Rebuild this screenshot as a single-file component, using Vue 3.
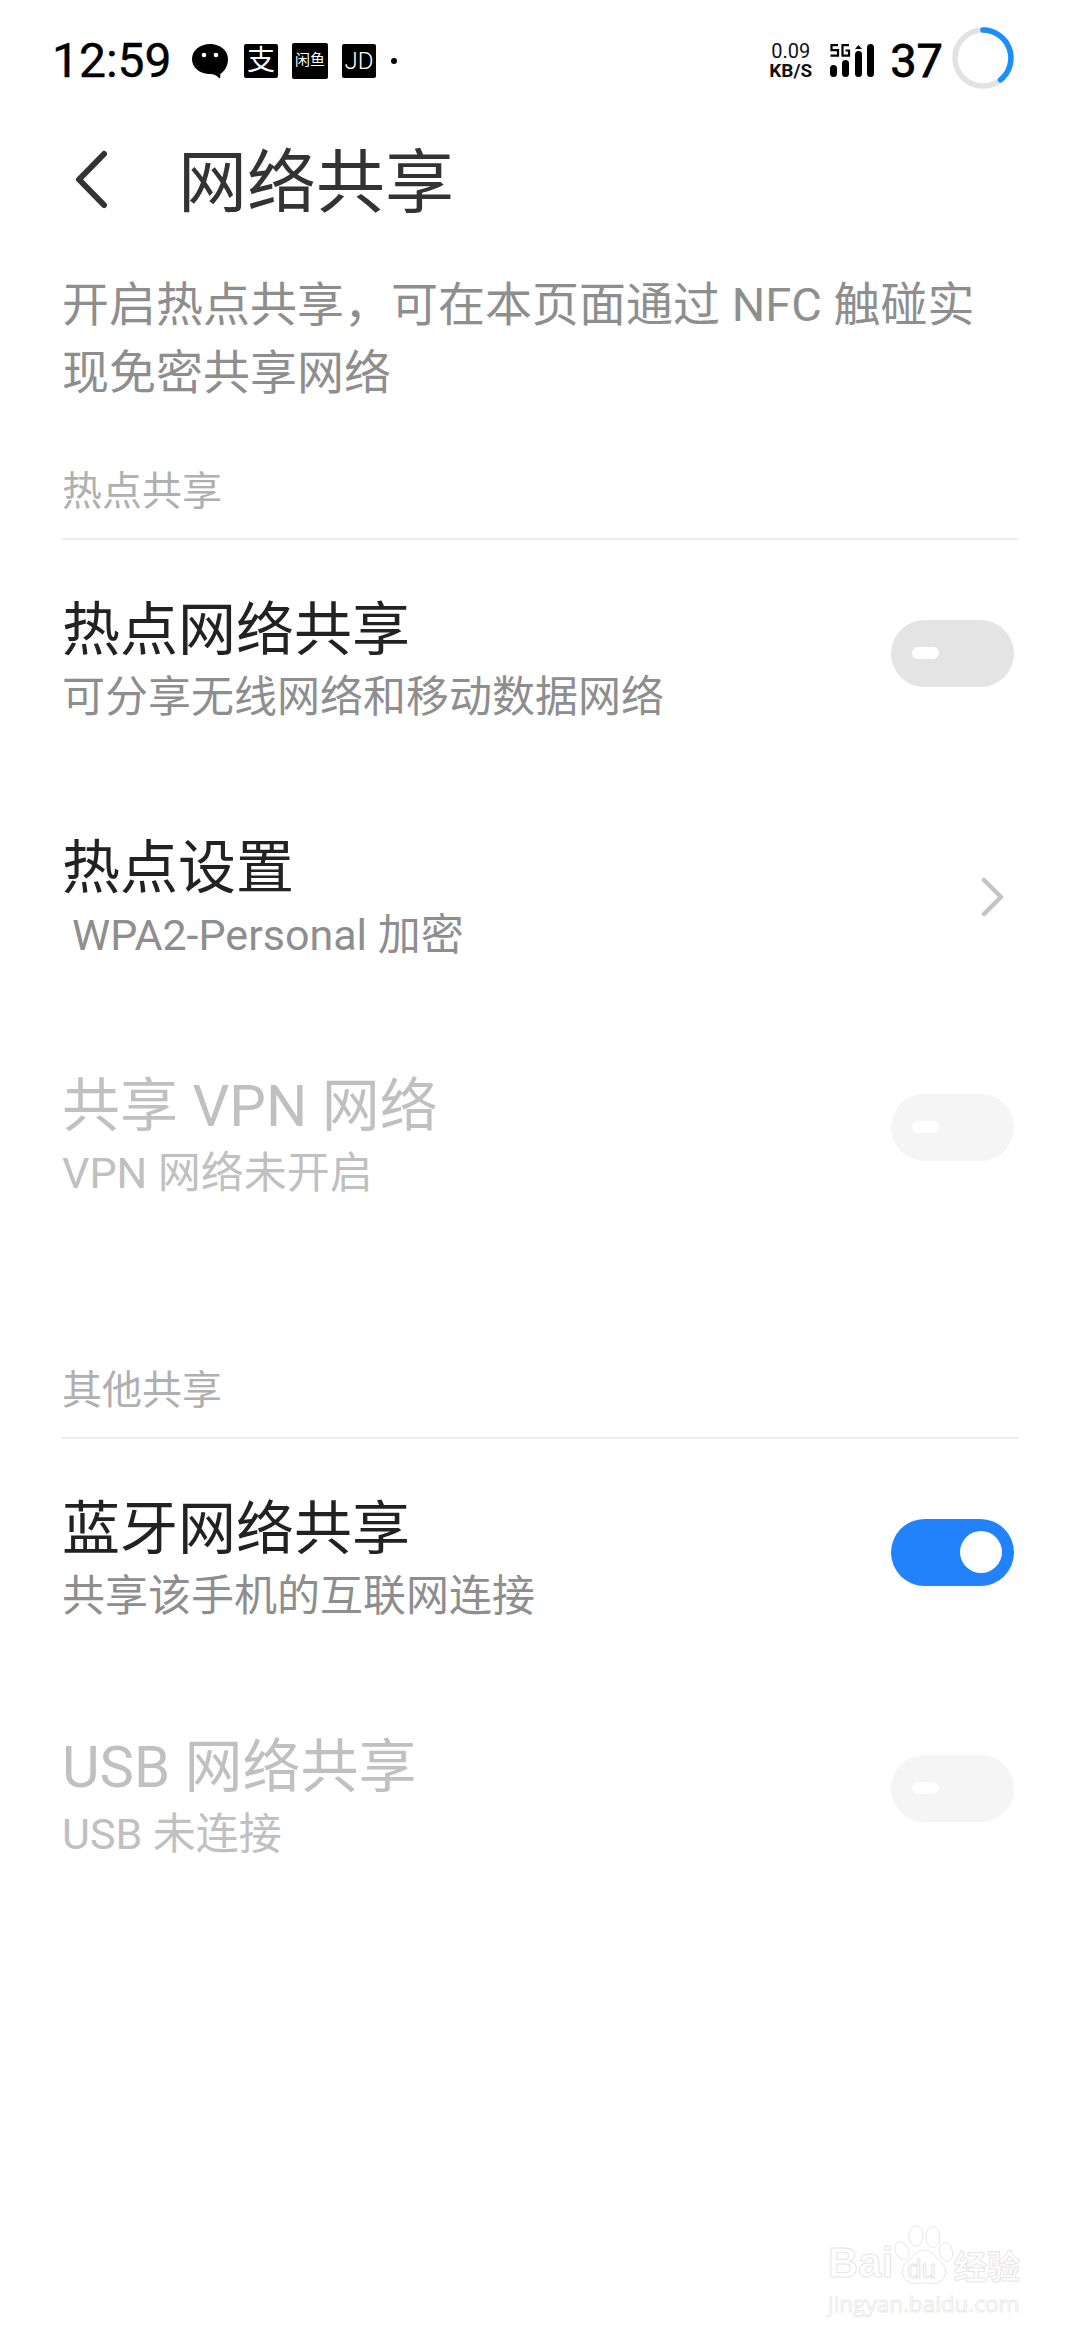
<template>
  <div class="page">
    <!-- status bar -->
    <div class="status">
      <div class="status-left">
        <span class="clock">12:59</span>
        <svg class="wechat" viewBox="0 0 38 36" width="38" height="36">
          <path d="M19 1C9 1 1 7.500 1 16c0 8 7 14.500 16.500 15 3 0 5 .3 7.500 1.500 1 .6 3 2.500 4 3 .5-1 .2-3 .3-4.500C34 28 37 22.500 37 16 37 7.500 29 1 19 1z" fill="#000" />
          <circle cx="13" cy="12" r="2.300" fill="#fff" />
          <circle cx="25" cy="12" r="2.300" fill="#fff" />
        </svg>
        <span class="app-box alipay">支</span>
        <span class="app-box xianyu">闲鱼</span>
        <span class="app-box jd">JD</span>
        <span class="dot"></span>
      </div>
      <div class="status-right">
        <div class="speed">
          <span>0.09</span>
          <b>KB/S</b>
        </div>
        <svg class="signal" viewBox="0 0 45 34" width="45" height="34">
          <path d="M8 1.200H1.500v5H8v5.500H.5" fill="none" stroke="#000" stroke-width="2.200" />
          <path d="M19 1.200h-6.500v10.500H19V6.500h-3.500" fill="none" stroke="#000" stroke-width="2.200" />
          <rect y="21" width="7" height="12" rx="3.500" fill="#000" />
          <rect x="12" y="16" width="7" height="17" rx="3.500" fill="#000" />
          <rect x="25" y="7" width="7" height="26" rx="3.500" fill="#000" />
          <rect x="37" width="7" height="33" rx="3.500" fill="#000" />
          <path d="M28.500 1l3.500 4h-7z" fill="#000" />
        </svg>
        <span class="battery-num">37</span>
        <svg class="battery-ring" viewBox="0 0 62 62" width="62" height="62">
          <circle cx="31" cy="31" r="28" fill="none" stroke="#e2e2e2" stroke-width="5.500" />
          <path d="M31 3A28 28 0 0 1 48.500 52.800" fill="none" stroke="#1a8ffa" stroke-width="5.500" stroke-linecap="round" />
        </svg>
      </div>
    </div>

    <!-- title -->
    <div class="topbar">
      <svg class="back" viewBox="0 0 34 60" width="34" height="60">
        <path d="M30 4L5 29.500 30 55" fill="none" stroke="#333" stroke-width="6" stroke-linecap="round" stroke-linejoin="round" />
      </svg>
      <h1>网络共享</h1>
    </div>

    <p class="intro">开启热点共享，可在本页面通过 NFC 触碰实现免密共享网络</p>

    <section v-for="group in groups" :key="group.name" class="group">
      <div class="group-name">{{ group.name }}</div>
      <div class="row" v-for="row in group.rows" :key="row.title" :class="{ off: row.disabled }">
        <div class="row-text">
          <div class="row-title">{{ row.title }}</div>
          <div class="row-sub" :class="{ indent: row.indent }">{{ row.sub }}</div>
        </div>
        <svg v-if="row.arrow" class="arrow" viewBox="0 0 24 40" width="24" height="40">
          <path d="M4 3l17 17L4 37" fill="none" stroke="#c4c4c4" stroke-width="4.500" stroke-linecap="round" stroke-linejoin="round" />
        </svg>
        <div v-else class="switch" :class="{ on: row.on }">
          <span class="knob"></span>
        </div>
      </div>
    </section>

    <!-- watermark -->
    <div class="watermark">
      <div class="wm-top">
        <span class="wm-bai">Bai</span>
        <div class="wm-paw">
          <svg viewBox="0 0 60 62" width="60" height="62">
            <g fill="#fff" stroke="#e8e8e8" stroke-width="1">
              <ellipse cx="8" cy="26" rx="6.500" ry="9.500" transform="rotate(-25 8 26)" />
              <ellipse cx="22" cy="11" rx="7" ry="10.500" />
              <ellipse cx="39" cy="12" rx="7" ry="10.500" />
              <ellipse cx="52" cy="27" rx="6.500" ry="9.500" transform="rotate(-15 52 27)" />
              <path d="M30 25c8 0 11 7 17 12 6 5 6 13 1 18-5 5-12 3-18 3s-13 2-18-3c-5-5-5-13 1-18 6-5 9-12 17-12z" />
            </g>
          </svg>
          <span class="wm-du">du</span>
        </div>
        <span class="wm-cn">经验</span>
      </div>
      <div class="wm-url">jingyan.baidu.com</div>
    </div>
  </div>
</template>

<script setup>
const groups = [
  {
    name: '热点共享',
    rows: [
      { title: '热点网络共享', sub: '可分享无线网络和移动数据网络' },
      { title: '热点设置', sub: 'WPA2-Personal 加密', arrow: true, indent: true },
      { title: '共享 VPN 网络', sub: 'VPN 网络未开启', disabled: true },
    ],
  },
  {
    name: '其他共享',
    rows: [
      { title: '蓝牙网络共享', sub: '共享该手机的互联网连接', on: true },
      { title: 'USB 网络共享', sub: 'USB 未连接', disabled: true },
    ],
  },
]
</script>

<style>
html, body { background: #fff; }
</style>

<style scoped>
.page {
  position: relative;
  width: 1080px;
  height: 2340px;
  background: #fff;
  overflow: hidden;
  font-family: Roboto, "Noto Sans CJK SC", sans-serif;
}

.status {
  height: 115px;
  padding: 0 66px 0 52px;
  display: flex;
  justify-content: space-between;
  align-items: center;
}
.status-left, .status-right {
  display: flex;
  align-items: center;
}
.status-left { margin-top: 6px; }
.clock {
  width: 139px;
  font-size: 48px;
  line-height: 1;
  color: #000;
  -webkit-text-stroke: 0.4px #000;
}
.wechat { flex: none; }
.app-box {
  flex: none;
  width: 34px;
  height: 34px;
  margin-left: 14px;
  background: #000;
  color: #fff;
  border-radius: 2px;
  display: flex;
  align-items: center;
  justify-content: center;
  line-height: 1;
}
.alipay { font-size: 28px; margin-left: 15px; }
.xianyu {
  width: 36px;
  height: 36px;
  font-size: 15px;
  white-space: nowrap;
}
.jd { font-size: 24px; font-weight: 300; }
.dot {
  width: 6px;
  height: 6px;
  margin-left: 15px;
  border-radius: 50%;
  background: #000;
}
.speed {
  display: flex;
  flex-direction: column;
  align-items: center;
  margin: 6px 18px 0 0;
  font-size: 20px;
  line-height: 19px;
  color: #111;
}
.speed b { font-size: 19px; font-weight: 700; }
.signal { margin: 6px 15px 0 0; }
.battery-num {
  margin: 6px 9px 0 0;
  font-size: 47px;
  line-height: 1;
  color: #000;
  -webkit-text-stroke: 0.8px #000;
}

.topbar {
  display: flex;
  align-items: center;
  height: 130px;
  padding-left: 74px;
}
.back { flex: none; }
h1 {
  margin: -6px 0 0 70px;
  font-size: 69px;
  font-weight: 400;
  color: #333;
}

.intro {
  margin: 26px 62px 0;
  font-size: 47px;
  line-height: 68px;
  color: #8e8e8e;
}

.group { margin: 0 62px; }
.group-name {
  margin-top: 48px;
  height: 83px;
  border-bottom: 2px solid #ececec;
  font-size: 40px;
  line-height: 74px;
  color: #b0b0b0;
}
.group + .group .group-name { margin-top: 100px; }

.row {
  height: 238px;
  display: flex;
  align-items: center;
  justify-content: space-between;
  padding-right: 4px;
}
.row-text { margin-top: 7px; }
.row-title {
  font-size: 58px;
  line-height: 70px;
  color: #222;
}
.row-sub {
  font-size: 43px;
  line-height: 65px;
  color: #8e8e8e;
}
.row-sub.indent { padding-left: 10px; }
.off .row-title, .off .row-sub { color: #c0c0c0; }

.arrow { margin-right: 10px; }

.switch {
  position: relative;
  flex: none;
  width: 123px;
  height: 67px;
  margin-top: -11px;
  border-radius: 34px;
  background: #e4e4e4;
}
.off .switch { background: #f5f5f5; margin-top: -15px; }
.switch.on { background: #2282fb; }
.knob {
  position: absolute;
  left: 21px;
  top: 27px;
  width: 27px;
  height: 12px;
  border-radius: 6px;
  background: #fff;
}
.switch.on .knob {
  left: 69px;
  top: 12px;
  width: 42px;
  height: 42px;
  border-radius: 50%;
}

.watermark {
  position: absolute;
  left: 828px;
  top: 2225px;
  width: 195px;
  color: #fff;
  -webkit-text-stroke: 1px #e6e6e6;
}
.wm-top {
  display: flex;
  align-items: flex-end;
  height: 62px;
  white-space: nowrap;
}
.wm-bai {
  width: 66px;
  font-family: "Liberation Sans", sans-serif;
  font-size: 42px;
  font-weight: 700;
  line-height: 48px;
}
.wm-paw {
  position: relative;
  flex: none;
  width: 60px;
  height: 62px;
}
.wm-du {
  position: absolute;
  left: 13px;
  top: 30px;
  font-family: "Liberation Sans", sans-serif;
  font-size: 26px;
  line-height: 28px;
}
.wm-cn {
  font-family: "Noto Sans CJK SC", sans-serif;
  font-size: 33px;
  font-weight: 700;
  line-height: 44px;
}
.wm-url {
  margin-top: 2px;
  font-family: "Open Sans", sans-serif;
  font-size: 22.500px;
  line-height: 30px;
  white-space: nowrap;
  -webkit-text-stroke-color: #ebebeb;
}
</style>
